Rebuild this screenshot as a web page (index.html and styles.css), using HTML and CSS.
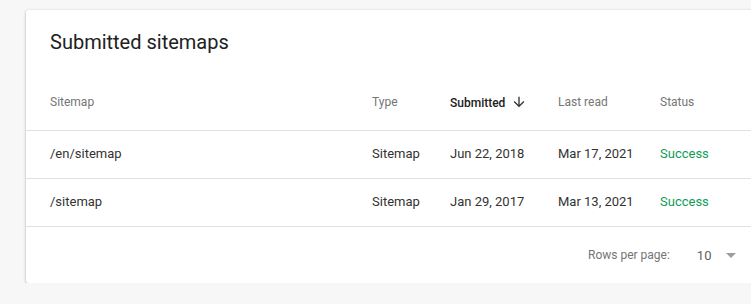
FILE: index.html
```html
<!DOCTYPE html>
<html lang="en">
<head>
    <meta charset="UTF-8">
    <meta name="viewport" content="width=device-width, initial-scale=1.0">
    <title>Sitemaps</title>
    <link rel="stylesheet" href="styles.css">
</head>
<body>

    <div class="card">
        <h2 class="card-title">Submitted sitemaps</h2>

        <table class="sitemap-table">
            <thead>
                <tr>
                    <th class="col-sitemap">Sitemap</th>
                    <th class="col-type">Type</th>
                    <th class="col-submitted sorted">Submitted
                        <svg class="sort-icon" viewBox="0 0 24 24" width="16" height="16"><path d="M20 12l-1.41-1.41L13 16.17V4h-2v12.17l-5.58-5.59L4 12l8 8 8-8z"/></svg>
                    </th>
                    <th class="col-read">Last read</th>
                    <th class="col-status">Status</th>
                </tr>
            </thead>
            <tbody>
                <tr>
                    <td>/en/sitemap</td>
                    <td>Sitemap</td>
                    <td>Jun 22, 2018</td>
                    <td>Mar 17, 2021</td>
                    <td class="success">Success</td>
                </tr>
                <tr>
                    <td>/sitemap</td>
                    <td>Sitemap</td>
                    <td>Jan 29, 2017</td>
                    <td>Mar 13, 2021</td>
                    <td class="success">Success</td>
                </tr>
            </tbody>
        </table>

        <div class="table-footer">
            <span class="rows-label">Rows per page:</span>
            <span class="rows-value">10</span>
            <span class="rows-arrow"></span>
        </div>
    </div>

</body>
</html>
```

FILE: styles.css
```css
body {
    font-family: Roboto, "Liberation Sans", Arial, sans-serif;
    margin: 0;
    padding: 10px 0 0 26px;
    background-color: #f7f7f7;
    overflow: hidden;
    color: #212121;
}

.card {
    width: 760px;
    background-color: #fff;
    border-radius: 2px;
    box-shadow: 0 1px 3px rgba(0, 0, 0, 0.3), 0 0 1px rgba(0, 0, 0, 0.1);
    padding-top: 18px;
}

.card-title {
    margin: 0 0 18px 24px;
    font-size: 20px;
    font-weight: 400;
    line-height: 28px;
    color: #212121;
}

.sitemap-table {
    border-collapse: collapse;
    table-layout: fixed;
    width: 100%;
}

.sitemap-table th,
.sitemap-table td {
    text-align: left;
    padding: 0;
    white-space: nowrap;
    border-bottom: 1px solid #e0e0e0;
}

.sitemap-table th {
    height: 55px;
    padding-bottom: 1px;
    font-size: 12px;
    font-weight: 400;
    color: #757575;
}

.sitemap-table td {
    height: 45px;
    padding-bottom: 2px;
    font-size: 13px;
    color: #333;
}

.sitemap-table th:first-child,
.sitemap-table td:first-child {
    padding-left: 24px;
}

.col-sitemap { width: 322px; }
.col-type { width: 78px; }
.col-submitted { width: 108px; }
.col-read { width: 102px; }

.sitemap-table th.sorted {
    color: #212121;
    font-weight: 500;
}

.sort-icon {
    fill: #333;
    vertical-align: -3px;
    margin-left: 3px;
}

.sitemap-table td.success {
    color: #0f9d58;
}

.table-footer {
    display: flex;
    align-items: center;
    height: 56px;
    padding-left: 562px;
    font-size: 12px;
    color: #757575;
}

.rows-value {
    margin-left: 27px;
    font-size: 13px;
    color: #616161;
}

.rows-arrow {
    margin-left: 15px;
    width: 0;
    height: 0;
    border-left: 5px solid transparent;
    border-right: 5px solid transparent;
    border-top: 5px solid #9e9e9e;
}
```
